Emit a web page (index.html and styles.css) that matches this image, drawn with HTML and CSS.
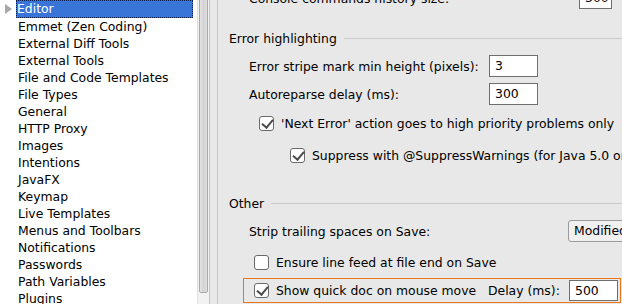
FILE: index.html
```html
<!DOCTYPE html>
<html>
<head><meta charset="utf-8"><link rel="stylesheet" href="styles.css"></head>
<body>
<div class="app">
  <div class="tree">
    <div class="row sel"><span class="arrow"></span><span class="label">Editor</span></div>
    <div class="row"><span class="label">Emmet (Zen Coding)</span></div>
    <div class="row"><span class="label">External Diff Tools</span></div>
    <div class="row"><span class="label">External Tools</span></div>
    <div class="row"><span class="label">File and Code Templates</span></div>
    <div class="row"><span class="label">File Types</span></div>
    <div class="row"><span class="label">General</span></div>
    <div class="row"><span class="label">HTTP Proxy</span></div>
    <div class="row"><span class="label">Images</span></div>
    <div class="row"><span class="label">Intentions</span></div>
    <div class="row"><span class="label">JavaFX</span></div>
    <div class="row"><span class="label">Keymap</span></div>
    <div class="row"><span class="label">Live Templates</span></div>
    <div class="row"><span class="label">Menus and Toolbars</span></div>
    <div class="row"><span class="label">Notifications</span></div>
    <div class="row"><span class="label">Passwords</span></div>
    <div class="row"><span class="label">Path Variables</span></div>
    <div class="row"><span class="label">Plugins</span></div>
  </div>
  <div class="scrollbar"><div class="thumb"></div></div>
  <div class="gutter"></div>
  <div class="content">
    <div class="line top-row"><span>Console commands history size:</span><span class="field top-field">300</span></div>
    <div class="sep-title"><span>Error highlighting</span><span class="rule"></span></div>
    <div class="line ind1 first"><span class="lbl">Error stripe mark min height (pixels):</span><span class="field">3</span></div>
    <div class="line ind1 l2"><span class="lbl">Autoreparse delay (ms):</span><span class="field">300</span></div>
    <div class="check c1"><span class="box on"></span><span>'Next Error' action goes to high priority problems only</span></div>
    <div class="check c2"><span class="box on"></span><span>Suppress with @SuppressWarnings (for Java 5.0 or higher)</span></div>
    <div class="sep-title other"><span>Other</span><span class="rule"></span></div>
    <div class="line ind1 strip"><span class="lbl2">Strip trailing spaces on Save:</span><span class="combo">Modified Lines</span></div>
    <div class="check c3"><span class="box"></span><span>Ensure line feed at file end on Save</span></div>
    <div class="check c4 hl"><span class="box on"></span><span class="sq">Show quick doc on mouse move</span><span class="delay">Delay (ms):</span><span class="field f500">500</span></div>
  </div>
</div>
</body>
</html>
```
FILE: styles.css
```css
* { box-sizing: border-box; }
html, body { margin: 0; padding: 0; }
body {
  width: 622px; height: 304px; overflow: hidden;
  font-family: "DejaVu Sans", sans-serif; font-size: 12.4px; color: #000;
  background: #e8e8e8;
}
.app { display: flex; height: 304px; }
.tree { width: 197px; background: #fff; flex: none; padding-top: 1px; }
.row { height: 17px; line-height: 17px; padding-left: 18px; position: relative; white-space: nowrap; }
.row.sel { margin-top: -1px; height: 18px; line-height: 18px; }
.row.sel .label {
  display: block; margin-left: -2px; padding-left: 1px; width: 177px;
  background: #3875d7; color: #fff; outline: 1px dotted #0a1a4a; outline-offset: -1px;
}
.arrow {
  position: absolute; left: 5px; top: 4px; width: 0; height: 0; z-index: 1;
  border-left: 7px solid #a8a8a8; border-top: 5px solid transparent; border-bottom: 5px solid transparent;
}
.scrollbar {
  width: 13px; flex: none; background: #f2f2f2;
  border-left: 1px solid #e0e0e0; border-right: 1px solid #c4c4c4;
  padding: 0 1px 0 1px;
}
.thumb {
  height: 297px; margin-top: -4px;
  border: 1px solid #a9a9a9; border-radius: 2px;
  background: linear-gradient(to right, #e4e4e4, #d2d2d2 50%, #e0e0e0);
}
.gutter { width: 8px; flex: none; border-right: 1px solid #c8c8c8; background: #e8e8e8; }
.content { flex: 1; position: relative; overflow: hidden; padding-left: 11px; white-space: nowrap; }
.line { display: flex; align-items: center; }
.top-row { height: 22px; margin-top: -13px; padding-left: 20px; }
.top-row .top-field { margin-left: auto; width: 33px; margin-right: 10px; }
.field {
  display: inline-block; flex: none; height: 22px; line-height: 20px; width: 49px;
  background: #fff; border: 1px solid #6e6e6e; padding-left: 5px;
}
.sep-title { display: flex; align-items: center; margin-top: 21px; height: 17px; }
.sep-title .rule { flex: 1; height: 1px; background: #cacaca; margin-left: 7px; margin-top: -1px; }
.ind1 { padding-left: 20px; height: 22px; }
.first { margin-top: 8px; }
.lbl, .lbl2 { display: inline-block; flex: none; }
.lbl { width: 240px; }
.l2 { margin-top: 6px; }
.check { display: flex; align-items: center; height: 17px; }
.box {
  width: 15px; height: 15px; flex: none; background: #fff;
  border: 1px solid #6a6a6a; border-radius: 3px; margin-right: 7px; position: relative;
}
.box.on::after {
  content: ""; position: absolute; left: 4px; top: 0px; width: 5px; height: 9px;
  border-right: 2.5px solid #4a4a4a; border-bottom: 2.5px solid #4a4a4a; transform: rotate(40deg);
}
.c1 { padding-left: 30px; margin-top: 10px; }
.c2 { padding-left: 61px; margin-top: 15px; }
.other { margin-top: 31px; }
.strip { margin-top: 8px; }
.lbl2 { width: 319px; }
.combo {
  display: inline-block; flex: none; height: 22px; line-height: 20px; padding-left: 5px; width: 90px;
  border: 1px solid #9a9a9a; border-radius: 3px; background: #f0f0f0;
}
.c3 { padding-left: 25px; margin-top: 12px; }
.c4 { margin-top: 7px; }
.hl {
  margin-left: 14px; margin-right: 1px; height: 25px; padding-left: 10px;
  border: 1px solid #e8761c;
}
.sq { width: 200px; flex: none; }
.delay { margin-left: 12px; width: 69px; flex: none; }
.f500 { margin-left: 12px; width: 49px; height: 21px; padding-left: 5px; }
```
